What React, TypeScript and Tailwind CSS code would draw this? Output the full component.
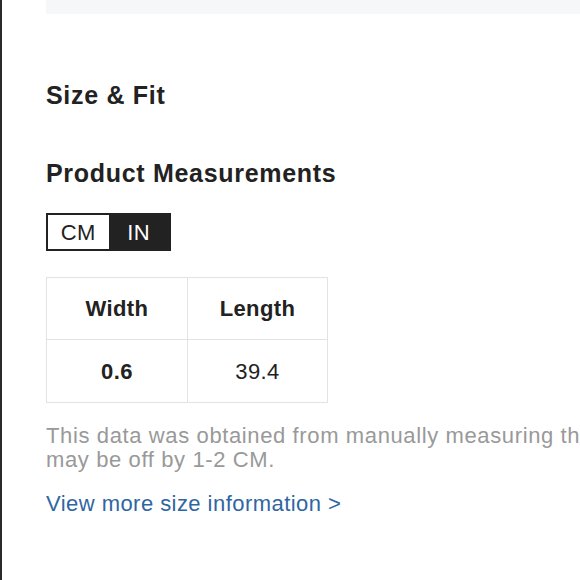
export default function App() {
  return (
    <div className="h-[580px] w-[580px] overflow-hidden border-l-2 border-[#2a2a2a] bg-white [font-family:Liberation_Sans,Arial,sans-serif] text-[#222]">
      <div className="pl-[44px]">
        <div className="h-[14px] bg-[#f6f7f9]" />

        <h2 className="mt-[66px] text-[25px] leading-[30px] font-bold tracking-[0.7px]">Size &amp; Fit</h2>

        <h3 className="mt-[48px] text-[25px] leading-[30px] font-bold tracking-[0.7px]">Product Measurements</h3>

        <div className="mt-[25px] flex w-[125px] h-[38px] border-2 border-[#222] text-[22px] tracking-[0.4px]">
          <button type="button" className="flex-1 flex items-center justify-center bg-white text-[#222]">
            CM
          </button>
          <button type="button" className="flex-1 flex items-center justify-center bg-[#222] text-white">
            IN
          </button>
        </div>

        <table className="mt-[26px] w-[282px] border-collapse border border-[#e3e3e3] text-[22px] tracking-[0.4px] text-center">
          <tbody>
            <tr className="h-[62px]">
              <th className="w-[141px] border border-[#e3e3e3] font-bold">Width</th>
              <th className="border border-[#e3e3e3] font-bold">Length</th>
            </tr>
            <tr className="h-[63px]">
              <td className="border border-[#e3e3e3] font-bold">0.6</td>
              <td className="border border-[#e3e3e3]">39.4</td>
            </tr>
          </tbody>
        </table>

        <p className="mt-[21px] text-[22px] leading-[24px] tracking-[0.62px] text-[#999] whitespace-nowrap">
          This data was obtained from manually measuring the product, it
          <br />
          may be off by 1-2 CM.
        </p>

        <a href="#" className="mt-[20px] block text-[22px] leading-[24px] tracking-[0.45px] text-[#2f66a2]">
          View more size information &gt;
        </a>
      </div>
    </div>
  );
}
